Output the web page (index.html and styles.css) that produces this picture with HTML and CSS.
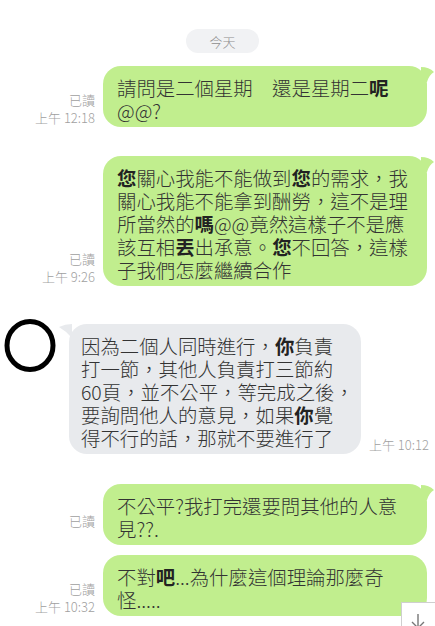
FILE: index.html
```html
<!DOCTYPE html>
<html lang="zh-Hant">
<head>
<meta charset="utf-8">
<title>Chat</title>
<link rel="stylesheet" href="styles.css">
</head>
<body>
<div class="chat">
  <div class="date-row"><span class="date-pill">今天</span></div>

  <div class="row out r1">
    <div class="meta"><span>已讀</span><span>上午 12:18</span></div>
    <div class="bubble green">請問是二個星期　還是星期二<b>呢</b><br>@@?<svg class="tail-r" width="14" height="16" viewBox="0 0 14 16"><path d="M0 0 Q8 0 13 5 Q8 8 6 15 L0 15 Z" fill="#c1ee8e"/></svg></div>
  </div>

  <div class="row out r2">
    <div class="meta"><span>已讀</span><span>上午 9:26</span></div>
    <div class="bubble green"><b>您</b>關心我能不能做到<b>您</b>的需求，我<br>關心我能不能拿到酬勞，這不是理<br>所當然的<b>嗎</b>@@竟然這樣子不是應<br>該互相<b>丟</b>出承意。<b>您</b>不回答，這樣<br>子我們怎麼繼續合作<svg class="tail-r" width="14" height="16" viewBox="0 0 14 16"><path d="M0 0 Q8 0 13 5 Q8 8 6 15 L0 15 Z" fill="#c1ee8e"/></svg></div>
  </div>

  <div class="row in r3">
    <svg class="avatar" width="52" height="54" viewBox="0 0 52 54"><ellipse cx="26" cy="26.5" rx="23" ry="24" fill="#fff" stroke="#000" stroke-width="5"/></svg>
    <div class="bubble gray">因為二個人同時進行，<b>你</b>負責<br>打一節，其他人負責打三節約<br>60頁，並不公平，等完成之後，<br>要詢問他人的意見，如果<b>你</b>覺<br>得不行的話，那就不要進行了<svg class="tail-l" width="14" height="16" viewBox="0 0 14 16"><path d="M1 3 Q7 0 14 0 L14 14 Q8 7 1 3 Z" fill="#e8eaed"/></svg></div>
    <div class="meta time-in"><span>上午 10:12</span></div>
  </div>

  <div class="row out r4">
    <div class="meta single"><span>已讀</span></div>
    <div class="bubble green">不公平?我打完還要問其他的人意<br>見??.<svg class="tail-r" width="14" height="16" viewBox="0 0 14 16"><path d="M0 0 Q8 0 13 5 Q8 8 6 15 L0 15 Z" fill="#c1ee8e"/></svg></div>
  </div>

  <div class="row out r5">
    <div class="meta"><span>已讀</span><span>上午 10:32</span></div>
    <div class="bubble green">不對<b>吧</b>...為什麼這個理論那麼奇<br>怪.....</div>
  </div>
</div>
<div class="scroll-btn"><svg width="16" height="18" viewBox="0 0 16 18"><path d="M8 2 V16 M2 10 L8 16 L14 10" fill="none" stroke="#777" stroke-width="1.4"/></svg></div>
</body>
</html>
```
FILE: styles.css
```css
html, body {
  margin: 0;
  padding: 0;
  background: #fff;
}
body {
  width: 435px;
  height: 626px;
  overflow: hidden;
  position: relative;
  font-family: "Noto Sans CJK TC", "Noto Sans", sans-serif;
}
.chat {
  padding-top: 29px;
}
.date-row {
  display: flex;
  justify-content: center;
  padding-left: 10px;
}
.date-pill {
  display: flex;
  align-items: center;
  justify-content: center;
  width: 73px;
  height: 24px;
  border-radius: 12px;
  background: #f1f2f4;
  color: #8e8e8e;
  font-size: 13px;
  font-weight: 300;
}
.row {
  display: flex;
  align-items: flex-end;
}
.row.out {
  justify-content: flex-end;
  padding-right: 8px;
  gap: 8px;
}
.r1 { margin-top: 13px; }
.r2 { margin-top: 29px; }
.r3 { margin-top: 33px; align-items: flex-start; padding-left: 4px; }
.r4 { margin-top: 30px; }
.r5 { margin-top: 10px; }
.meta {
  display: flex;
  flex-direction: column;
  align-items: flex-end;
  font-size: 13px;
  font-weight: 300;
  line-height: 18px;
  color: #9f9f9f;
  white-space: nowrap;
}
.meta.single {
  padding-bottom: 15px;
}
.bubble {
  position: relative;
  box-sizing: border-box;
  font-size: 19.4px;
  font-weight: 300;
  line-height: 23px;
  color: #333;
  white-space: nowrap;
  border-radius: 18px;
  padding: 10px 13px 5px 14px;
}
.bubble b {
  font-weight: 700;
  color: #222;
}
.green {
  width: 324px;
  background: #c1ee8e;
}
.gray {
  width: 292px;
  background: #e8eaed;
  margin-left: 13px;
  margin-top: 5px;
  padding-left: 12px;
}
.tail-r {
  position: absolute;
  top: 1px;
  right: -8px;
}
.tail-l {
  position: absolute;
  top: 0;
  left: -11px;
}
.avatar {
  display: block;
}
.time-in {
  align-self: flex-end;
  margin-left: 8px;
}
.scroll-btn {
  position: absolute;
  left: 401px;
  top: 602px;
  width: 40px;
  height: 32px;
  box-sizing: border-box;
  background: #fff;
  border: 1px solid #cfcfcf;
  display: flex;
  justify-content: center;
  padding-top: 9px;
  padding-right: 6px;
}
```
